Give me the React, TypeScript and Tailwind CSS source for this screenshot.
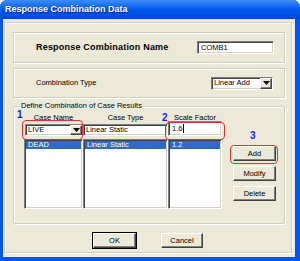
import React from "react";

const sunken =
  "border border-t-[#808080] border-l-[#808080] border-r-white border-b-white shadow-[inset_1px_1px_0_#404040,inset_-1px_-1px_0_#d4d0c8]";
const raised =
  "border border-t-white border-l-white border-r-[#404040] border-b-[#404040] shadow-[inset_-1px_-1px_0_#808080] bg-[#ece9d8]";
const etched = "border border-[#d0d0bf] shadow-[inset_1px_1px_0_#ffffff,1px_1px_0_#ffffff]";

function Arrow() {
  return (
    <div className={`flex h-full w-[12px] items-center justify-center ${raised}`}>
      <svg width="7" height="4" viewBox="0 0 7 4">
        <path d="M0 0h7L3.5 4z" fill="#000" />
      </svg>
    </div>
  );
}

function Btn({ label, def }: { label: string; def?: boolean }) {
  return (
    <div
      className={`flex h-[15px] items-center justify-center text-[7.5px] text-black ${raised} ${
        def ? "outline outline-1 outline-black" : ""
      }`}
    >
      {label}
    </div>
  );
}

export default function App() {
  return (
    <div className="relative h-[261px] w-[300px] bg-white font-['Liberation_Sans',Arial,sans-serif] text-black">
      <div className="flex h-full flex-col rounded-t-[7px] bg-[#0055ea]">
        <div className="flex h-[19px] items-center rounded-t-[7px] bg-gradient-to-b from-[#3b8cf8] via-[#0058ee] to-[#0049d9] pl-[5px]">
          <span className="text-[9px] font-bold text-white [text-shadow:1px_1px_0_#0a1f8a]">
            Response Combination Data
          </span>
        </div>
        <div className="mb-[4px] ml-[3px] mr-[5px] flex-1 bg-[#ece9d8] pb-[4px] pl-[1px] pr-[3px] pt-[3px]">
          <div className={`flex h-full flex-col pl-[8px] pr-[6px] pt-[9px] ${etched}`}>
            <div className={`flex h-[31px] items-center justify-between pl-[22px] pr-[10px] ${etched}`}>
              <span className="text-[9px] font-bold tracking-[0.2px]">Response Combination Name</span>
              <div className={`flex h-[13px] w-[77px] items-center bg-white pl-[3px] text-[7.5px] ${sunken}`}>
                COMB1
              </div>
            </div>

            <div className={`mt-[5px] flex h-[30px] items-center justify-between pl-[22px] pr-[11px] ${etched}`}>
              <span className="text-[7.5px]">Combination Type</span>
              <div className={`flex h-[13px] w-[62px] items-center justify-between bg-white pl-[2px] text-[7.5px] ${sunken}`}>
                Linear Add
                <Arrow />
              </div>
            </div>

            <fieldset className={`mt-[3px] h-[123px] rounded-[2px] pb-[10px] ${etched}`}>
              <legend className="ml-[6px] px-[1px] text-[7.5px] leading-[10px]">
                Define Combination of Case Results
              </legend>
              <div className="flex pl-[10px]">
                <div className="grid grid-cols-[59px_85px_54px] grid-rows-[14px_14px_70px] items-end">
                  <span className="self-center text-center text-[7.5px]">Case Name</span>
                  <span className="self-center text-center text-[7.5px]">Case Type</span>
                  <span className="self-center text-center text-[7.5px]">Scale Factor</span>

                  <div className={`ml-[1px] mb-[3px] flex h-[12px] items-center justify-between bg-white pl-[2px] text-[7.5px] ${sunken}`}>
                    LIVE
                    <Arrow />
                  </div>
                  <div className={`mb-[3px] flex h-[12px] items-center bg-white pl-[2px] text-[7.5px] ${sunken}`}>
                    Linear Static
                  </div>
                  <div className={`mb-[3px] flex h-[15px] items-center bg-white pl-[3px] text-[7.5px] ${sunken}`}>
                    1.6<span className="ml-[1px] h-[9px] w-px bg-black" />
                  </div>

                  {["DEAD", "Linear Static", "1.2"].map((v) => (
                    <div key={v} className={`h-[70px] bg-white p-[1px] text-[7.5px] ${sunken}`}>
                      <div className="h-[8px] bg-[#316ac5] pl-[2px] leading-[8px] text-white">{v}</div>
                    </div>
                  ))}
                </div>

                <div className="ml-[11px] mt-[35px] flex w-[43px] flex-col gap-[5px]">
                  <Btn label="Add" />
                  <Btn label="Modify" />
                  <Btn label="Delete" />
                </div>
              </div>
            </fieldset>

            <div className="mt-[9px] flex gap-[25px] pl-[80px]">
              <div className="w-[43px]">
                <Btn label="OK" def />
              </div>
              <div className="w-[42px]">
                <Btn label="Cancel" />
              </div>
            </div>
          </div>
        </div>
      </div>

      <span className="absolute left-[17px] top-[110px] text-[10px] font-bold leading-[10px] text-[#1a1aff]">1</span>
      <span className="absolute left-[162px] top-[113px] text-[10px] font-bold leading-[10px] text-[#1a1aff]">2</span>
      <span className="absolute left-[250px] top-[131px] text-[10px] font-bold leading-[10px] text-[#1a1aff]">3</span>
      <div className="absolute left-[22px] top-[120px] h-[20px] w-[61px] rounded-[4px] border border-[#e0303a]" />
      <div className="absolute left-[165px] top-[122px] h-[18px] w-[60px] rounded-[4px] border border-[#e0303a]" />
      <div className="absolute left-[230px] top-[145px] h-[19px] w-[48px] rounded-[4px] border border-[#e0303a]" />
    </div>
  );
}
